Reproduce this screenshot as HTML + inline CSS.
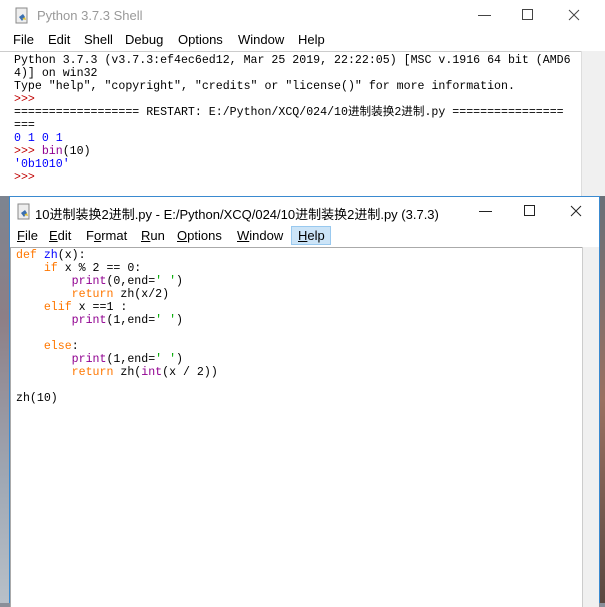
<!DOCTYPE html>
<html><head><meta charset="utf-8"><style>
*{margin:0;padding:0;box-sizing:border-box}
body{width:605px;height:603px;overflow:hidden;position:relative;background:#8a8f99;font-family:"Liberation Sans","Noto Sans CJK SC",sans-serif}
.win{position:absolute;background:#fff}
.menu{position:absolute;font-size:13px;color:#000}
.menu span{position:absolute;top:0}
pre{position:absolute;font-family:"Liberation Mono","Noto Sans CJK SC",monospace;font-size:11.6px;line-height:13px;color:#000}
.k{color:#ff7700}.b{color:#900090}.s{color:#00aa00}.p{color:#c00000}.o{color:#0000ff}.f{color:#0000ff}
</style></head><body>
<!-- shell window -->
<div class="win" style="left:0;top:0;width:605px;height:200px;background:#fff">
  <svg style="position:absolute;left:15px;top:7px" width="14" height="17"><rect x="1" y="1" width="11" height="15" fill="#eee" stroke="#888"/><path d="M4 10 l4 -3 l2 3 l-3 4z" fill="#3a6fb0"/><path d="M7 12 l3 -2 l1 3z" fill="#e0c030"/></svg>
  <span style="position:absolute;left:37px;top:8px;font-size:13px;color:#999">Python 3.7.3 Shell</span>
  <div style="position:absolute;left:478px;top:15px;width:13px;height:1px;background:#444"></div>
  <svg style="position:absolute;left:522px;top:9px" width="12" height="12"><rect x="0.5" y="0.5" width="10" height="10" fill="none" stroke="#444"/></svg>
  <svg style="position:absolute;left:568px;top:9px" width="12" height="12"><path d="M1 1L11 11M11 1L1 11" stroke="#444"/></svg>
 <div class="menu" style="left:0;top:32px;width:605px;height:19px">
  <span style="left:13px">File</span><span style="left:48px">Edit</span><span style="left:84px">Shell</span><span style="left:125px">Debug</span><span style="left:178px">Options</span><span style="left:238px">Window</span><span style="left:298px">Help</span>
 </div>
 <div style="position:absolute;left:0;top:51px;width:581px;height:145px;background:#fff;border-top:1px solid #ccc"></div>
 <div style="position:absolute;left:581px;top:51px;width:24px;height:145px;background:#f0f0f0;border-left:1px solid #ddd"></div>
 <pre style="left:14px;top:54px">Python 3.7.3 (v3.7.3:ef4ec6ed12, Mar 25 2019, 22:22:05) [MSC v.1916 64 bit (AMD6
4)] on win32
Type "help", "copyright", "credits" or "license()" for more information.
<span class="p">&gt;&gt;&gt;</span>
================== RESTART: E:/Python/XCQ/024/10进制装换2进制.py ================
===
<span class="o">0 1 0 1 </span>
<span class="p">&gt;&gt;&gt;</span> <span class="b">bin</span>(10)
<span class="o">'0b1010'</span>
<span class="p">&gt;&gt;&gt;</span></pre>
</div>
<!-- desktop strips -->
<div style="position:absolute;left:0;top:196px;width:9px;height:407px;background:linear-gradient(#7d8490,#8d7f86 30%,#a0a8b4 70%,#b8c0c8)"></div>
<div style="position:absolute;left:600px;top:196px;width:5px;height:407px;background:linear-gradient(#6a7078,#9a7060 50%,#5a4840)"></div>
<!-- editor window -->
<div class="win" style="left:9px;top:196px;width:591px;height:407px;border-left:1px solid #3a8ad0;border-right:1px solid #3a8ad0;border-top:1px solid #3a8ad0">
 <svg style="position:absolute;left:7px;top:6px" width="14" height="17"><rect x="1" y="1" width="11" height="15" fill="#eee" stroke="#888"/><path d="M4 10 l4 -3 l2 3 l-3 4z" fill="#3a6fb0"/><path d="M7 12 l3 -2 l1 3z" fill="#e0c030"/></svg>
 <span style="position:absolute;left:25px;top:7px;font-size:13px;color:#000">10进制装换2进制.py - E:/Python/XCQ/024/10进制装换2进制.py (3.7.3)</span>
 <div style="position:absolute;left:469px;top:14px;width:13px;height:1px;background:#222"></div>
 <svg style="position:absolute;left:514px;top:8px" width="12" height="12"><rect x="0.5" y="0.5" width="10" height="10" fill="none" stroke="#222"/></svg>
 <svg style="position:absolute;left:560px;top:8px" width="12" height="12"><path d="M1 1L11 11M11 1L1 11" stroke="#222"/></svg>
 <div class="menu" style="left:0;top:29px;width:589px;height:20px">
  <span style="left:281px;top:0;width:40px;height:19px;background:#cce4f7;border:1px solid #99c9ef"></span>
  <span style="left:7px;top:2px"><u>F</u>ile</span><span style="left:39px;top:2px"><u>E</u>dit</span><span style="left:76px;top:2px">F<u>o</u>rmat</span><span style="left:131px;top:2px"><u>R</u>un</span><span style="left:167px;top:2px"><u>O</u>ptions</span><span style="left:227px;top:2px"><u>W</u>indow</span><span style="left:288px;top:2px"><u>H</u>elp</span>
 </div>
 <div style="position:absolute;left:0;top:50px;width:572px;height:360px;border-top:1px solid #aaa;border-left:1px solid #aaa;background:#fff"></div>
 <div style="position:absolute;left:572px;top:50px;width:17px;height:360px;background:#f0f0f0;border-left:1px solid #ccc"></div>
 <pre style="left:6px;top:52px"><span class="k">def</span> <span class="f">zh</span>(x):
    <span class="k">if</span> x % 2 == 0:
        <span class="b">print</span>(0,end=<span class="s">' '</span>)
        <span class="k">return</span> zh(x/2)
    <span class="k">elif</span> x ==1 :
        <span class="b">print</span>(1,end=<span class="s">' '</span>)

    <span class="k">else</span>:
        <span class="b">print</span>(1,end=<span class="s">' '</span>)
        <span class="k">return</span> zh(<span class="b">int</span>(x / 2))

zh(10)</pre>
</div>
</body></html>
